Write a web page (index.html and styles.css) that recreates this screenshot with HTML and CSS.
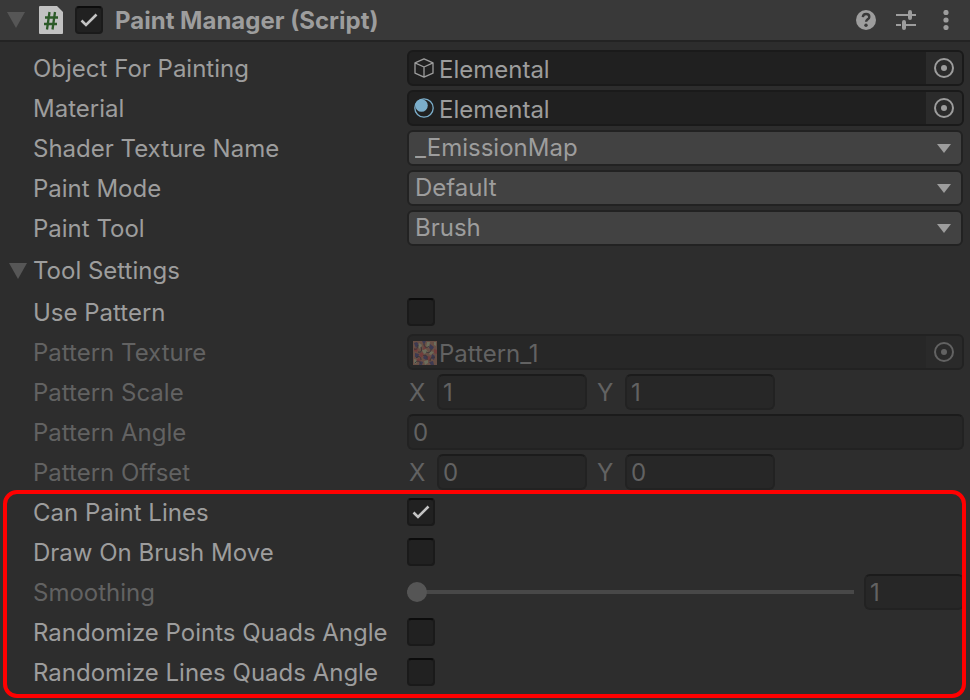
FILE: index.html
```html
<!DOCTYPE html>
<html lang="en">
<head>
<meta charset="utf-8">
<title>Paint Manager</title>
<link rel="stylesheet" href="styles.css">
</head>
<body>
<main class="inspector">
  <header class="header">
    <button class="foldout" type="button" aria-label="Collapse component">
      <svg width="18" height="16" viewBox="0 0 18 16"><path d="M0 0h18L9 16z" fill="currentColor"/></svg>
    </button>
    <svg class="script-icon" width="24" height="28" viewBox="0 0 24 28">
      <path d="M1 0h17l6 6v21a1 1 0 0 1-1 1H1a1 1 0 0 1-1-1V1a1 1 0 0 1 1-1z" fill="#c2c2c2"/>
      <path d="M10.500 6L8 23.500M16 6l-2.500 17.500M6 11.500H19M5 18H18" stroke="#2c5a28" stroke-width="2.300" fill="none"/>
    </svg>
    <span class="check">
      <input type="checkbox" id="enabled" checked>
      <svg width="28" height="28" viewBox="0 0 28 28"><path d="M6.500 14.500l4.500 4.500L21.500 8.500" fill="none" stroke="currentColor" stroke-width="2.600"/></svg>
    </span>
    <label class="title" for="enabled">Paint Manager (Script)</label>
    <div class="tools">
      <button type="button" aria-label="Help">
        <svg width="20" height="20" viewBox="0 0 20 20"><circle cx="10" cy="10" r="10" fill="currentColor"/><path d="M6.800 7.200C7 5 8.400 4 10.100 4c1.900 0 3.200 1.100 3.200 2.900 0 2.300-3.200 2.500-3.200 4.900" fill="none" stroke="#393939" stroke-width="2.400"/><circle cx="10" cy="15.300" r="1.700" fill="#393939"/></svg>
      </button>
      <button type="button" aria-label="Presets">
        <svg width="20" height="20" viewBox="0 0 20 20"><path d="M0 5h12M16 5h4M0 15h5M10 15h10" stroke="currentColor" stroke-width="2"/><path d="M14 2v6M8 12v6" stroke="currentColor" stroke-width="4" stroke-linecap="round"/></svg>
      </button>
      <button type="button" aria-label="More options">
        <svg width="20" height="20" viewBox="0 0 20 20"><g fill="currentColor"><circle cx="10" cy="2.500" r="2.600"/><circle cx="10" cy="10" r="2.600"/><circle cx="10" cy="17.500" r="2.600"/></g></svg>
      </button>
    </div>
  </header>

  <section class="rows">
    <div class="row">
      <label for="object">Object For Painting</label>
      <div class="object">
        <svg width="20" height="20" viewBox="0 0 20 20"><path d="M10 .8l9 4v10.400l-9 4-9-4V4.800zM1 4.800L10 9l9-4.200M10 9v10" fill="none" stroke="currentColor" stroke-width="1.300" stroke-linejoin="round"/></svg>
        <span class="object-name">Elemental</span>
        <button class="picker" type="button" id="object"><svg width="20" height="20" viewBox="0 0 20 20"><circle cx="10" cy="10" r="9" fill="none" stroke="currentColor" stroke-width="2"/><circle cx="10" cy="10" r="3" fill="currentColor"/></svg></button>
      </div>
    </div>
    <div class="row">
      <label for="material">Material</label>
      <div class="object">
        <svg width="20" height="20" viewBox="0 0 20 20"><circle cx="10" cy="10" r="9.200" fill="none" stroke="#7baecb" stroke-width="1.300"/><circle cx="7.500" cy="7.500" r="6.300" fill="#7baecb"/></svg>
        <span class="object-name">Elemental</span>
        <button class="picker" type="button" id="material"><svg width="20" height="20" viewBox="0 0 20 20"><circle cx="10" cy="10" r="9" fill="none" stroke="currentColor" stroke-width="2"/><circle cx="10" cy="10" r="3" fill="currentColor"/></svg></button>
      </div>
    </div>
    <div class="row">
      <label for="texture-name">Shader Texture Name</label>
      <div class="dropdown"><select id="texture-name"><option>_EmissionMap</option></select><svg width="14" height="9" viewBox="0 0 14 9"><path d="M0 0h14L7 9z" fill="currentColor"/></svg></div>
    </div>
    <div class="row">
      <label for="mode">Paint Mode</label>
      <div class="dropdown"><select id="mode"><option>Default</option></select><svg width="14" height="9" viewBox="0 0 14 9"><path d="M0 0h14L7 9z" fill="currentColor"/></svg></div>
    </div>
    <div class="row">
      <label for="tool">Paint Tool</label>
      <div class="dropdown"><select id="tool"><option>Brush</option></select><svg width="14" height="9" viewBox="0 0 14 9"><path d="M0 0h14L7 9z" fill="currentColor"/></svg></div>
    </div>
  </section>

  <h2 class="group">
    <button class="foldout" type="button" aria-labelledby="settings"><svg width="18" height="16" viewBox="0 0 18 16"><path d="M0 0h18L9 16z" fill="currentColor"/></svg></button>
    <span id="settings">Tool Settings</span>
  </h2>

  <section class="rows">
    <div class="row">
      <label for="use-pattern">Use Pattern</label>
      <span class="check"><input type="checkbox" id="use-pattern"></span>
    </div>
    <div class="row disabled">
      <label for="pattern">Pattern Texture</label>
      <div class="object">
        <svg class="thumb" width="24" height="24" viewBox="0 0 24 24">
          <path fill="#684f45" d="M0 0h24v24H0z"/>
          <path fill="#3d3a52" d="M1 2l3-1 2 3-3 3zM9 0h4l-2 4zM17 3l4 3-2 3-3-2zM2 12l4 1-1 4-3-1zM12 14l3 2-2 3-3-2zM19 13l3 2-1 4-3-2zM7 20l3 1-1 3H6zM16 21l4-1 1 4h-3z"/>
          <path fill="#6c6d5b" d="M6 2l3 2-2 4-2-2zM14 1h3l-1 5-3 1zM9 9l4-1 2 3-4 2zM1 18l4 1-2 4-2-1zM17 10l4 1-3 3-2-1zM11 20l4-1v3l-3 2zM21 1h2v4l-2-1z"/>
          <path fill="#713d3c" d="M1 7l4 1-1 3-3-1zM11 4l3 3-4 2zM6 13l3-2 2 3-3 3zM15 15l3 1-2 4-2-2zM21 8l3 1v4l-3-1zM3 19l3-2 2 3-3 1z"/>
          <path fill="none" stroke="#393539" d="M1 8c3 1 4-1 4-4M5 11c4 1 4-2 3-5M11 3c0 4 4 4 5 2M18 8c0 4-3 4-5 3M3 17c3-3 5-1 5 2M10 15c3-2 5 0 4 4M17 20c0-3 3-5 5-3M2 22c2-3 5-2 6 1"/>
        </svg>
        <span class="object-name">Pattern_1</span>
        <button class="picker" type="button" id="pattern" disabled><svg width="20" height="20" viewBox="0 0 20 20"><circle cx="10" cy="10" r="9" fill="none" stroke="currentColor" stroke-width="2"/><circle cx="10" cy="10" r="3" fill="currentColor"/></svg></button>
      </div>
    </div>
    <div class="row disabled" role="group" aria-labelledby="scale">
      <span class="name" id="scale">Pattern Scale</span>
      <div class="vector">
        <label for="scale-x">X</label><input class="field" id="scale-x" value="1" disabled>
        <label for="scale-y">Y</label><input class="field" id="scale-y" value="1" disabled>
      </div>
    </div>
    <div class="row disabled">
      <label for="angle">Pattern Angle</label>
      <input class="field" id="angle" value="0" disabled>
    </div>
    <div class="row disabled" role="group" aria-labelledby="offset">
      <span class="name" id="offset">Pattern Offset</span>
      <div class="vector">
        <label for="offset-x">X</label><input class="field" id="offset-x" value="0" disabled>
        <label for="offset-y">Y</label><input class="field" id="offset-y" value="0" disabled>
      </div>
    </div>
  </section>

  <section class="rows highlighted">
    <div class="row">
      <label for="lines">Can Paint Lines</label>
      <span class="check"><input type="checkbox" id="lines" checked><svg width="28" height="28" viewBox="0 0 28 28"><path d="M6.500 14.500l4.500 4.500L21.500 8.500" fill="none" stroke="currentColor" stroke-width="2.600"/></svg></span>
    </div>
    <div class="row">
      <label for="brush-move">Draw On Brush Move</label>
      <span class="check"><input type="checkbox" id="brush-move"></span>
    </div>
    <div class="row disabled">
      <label for="smoothing" id="smoothing-name">Smoothing</label>
      <div class="slider">
        <input type="range" id="smoothing" min="1" max="10" value="1" disabled>
        <input class="field" aria-labelledby="smoothing-name" value="1" disabled>
      </div>
    </div>
    <div class="row">
      <label for="random-points">Randomize Points Quads Angle</label>
      <span class="check"><input type="checkbox" id="random-points"></span>
    </div>
    <div class="row">
      <label for="random-lines">Randomize Lines Quads Angle</label>
      <span class="check"><input type="checkbox" id="random-lines"></span>
    </div>
  </section>
</main>
</body>
</html>
```
FILE: styles.css
```css
* {
  box-sizing: border-box;
}

body {
  margin: 0;
  background: #2d2d2d;
  color: #9d9d9d;
  font: 24px/36px Inter, "Liberation Sans", sans-serif;
}

button,
input,
select {
  margin: 0;
  padding: 0;
  border: 0;
  background: none;
  color: inherit;
  font: inherit;
}

button {
  display: grid;
  place-items: center;
}

svg {
  display: block;
  flex: none;
}

.header {
  display: flex;
  align-items: center;
  gap: 12px;
  height: 42px;
  padding: 0 14px 0 7px;
  border-bottom: 2px solid #232323;
  background: #393939;
}

.foldout {
  color: #565656;
}

.header .foldout {
  margin-right: 2px;
}

.title {
  padding-top: 2px;
  font-weight: 700;
}

.tools {
  display: flex;
  gap: 20px;
  margin-left: auto;
}

.rows {
  display: grid;
  gap: 4px;
  padding: 0 6px 4px 33px;
}

.header + .rows {
  padding-top: 8px;
}

.row {
  display: grid;
  grid-template: 36px / 374px minmax(0, 1fr);
  align-items: center;
}

.row label,
.row .name {
  padding-top: 2px;
}

.disabled {
  color: #626262;
}

.group {
  display: flex;
  align-items: center;
  gap: 6px;
  height: 44px;
  margin: 0;
  padding: 0 9px 2px;
  font: inherit;
}

.object {
  display: flex;
  align-items: center;
  height: 36px;
  padding-left: 5px;
  border: 2px solid #1a1a1a;
  border-radius: 6px;
  background: #202020;
}

.object-name {
  flex: 1;
  padding: 4px 0 0 5px;
}

.picker {
  width: 36px;
  height: 32px;
  border-radius: 0 4px 4px 0;
  background: #2b2b2b;
}

.disabled .object {
  border-color: #222;
  background: #272727;
}

.disabled .picker {
  background: #2a2a2a;
}

.object .thumb {
  margin: 2px -3px 0 -1px;
}

.dropdown {
  display: grid;
  align-items: center;
  padding-right: 1px;
}

.dropdown select,
.dropdown svg {
  grid-area: 1 / 1;
}

.dropdown select {
  width: 100%;
  height: 36px;
  padding: 0 32px 0 6px;
  border: 2px solid #222;
  border-radius: 6px;
  appearance: none;
  background: #424242;
  line-height: 32px;
}

.dropdown svg {
  justify-self: end;
  margin-right: 12px;
  pointer-events: none;
}

.check {
  display: grid;
  width: 28px;
  height: 28px;
  color: #c4c4c4;
}

.check input,
.check svg {
  grid-area: 1 / 1;
}

.check input {
  width: 28px;
  height: 28px;
  border: 2px solid #1a1a1a;
  border-top-color: #0c0c0c;
  border-radius: 4px;
  appearance: none;
  background: #212121;
}

.check svg {
  pointer-events: none;
}

.check input:not(:checked) + svg {
  visibility: hidden;
}

.field {
  width: 100%;
  height: 36px;
  padding: 2px 4px 0;
  border: 2px solid #222;
  border-top-color: #1b1b1b;
  border-radius: 6px;
  background: #272727;
}

.vector {
  display: grid;
  grid-template: 36px / 30px 150px 38px 150px;
  align-items: center;
}

.vector label {
  padding-left: 2px;
}

.vector .field + label {
  padding-left: 10px;
}

.slider {
  display: grid;
  grid-template-columns: minmax(0, 1fr) 100px;
  align-items: center;
  gap: 10px;
}

.slider input[type="range"] {
  width: 100%;
  height: 20px;
  appearance: none;
}

.slider input::-webkit-slider-runnable-track {
  height: 4px;
  background: #484848;
}

.slider input::-webkit-slider-thumb {
  width: 20px;
  height: 20px;
  margin-top: -8px;
  border-radius: 50%;
  appearance: none;
  background: #555;
}

.highlighted {
  position: relative;
  padding-bottom: 10px;
}

.highlighted::after {
  content: "";
  position: absolute;
  inset: -4px 4px 2px 3px;
  border: 4px solid #f00;
  border-radius: 14px;
  pointer-events: none;
}
```
